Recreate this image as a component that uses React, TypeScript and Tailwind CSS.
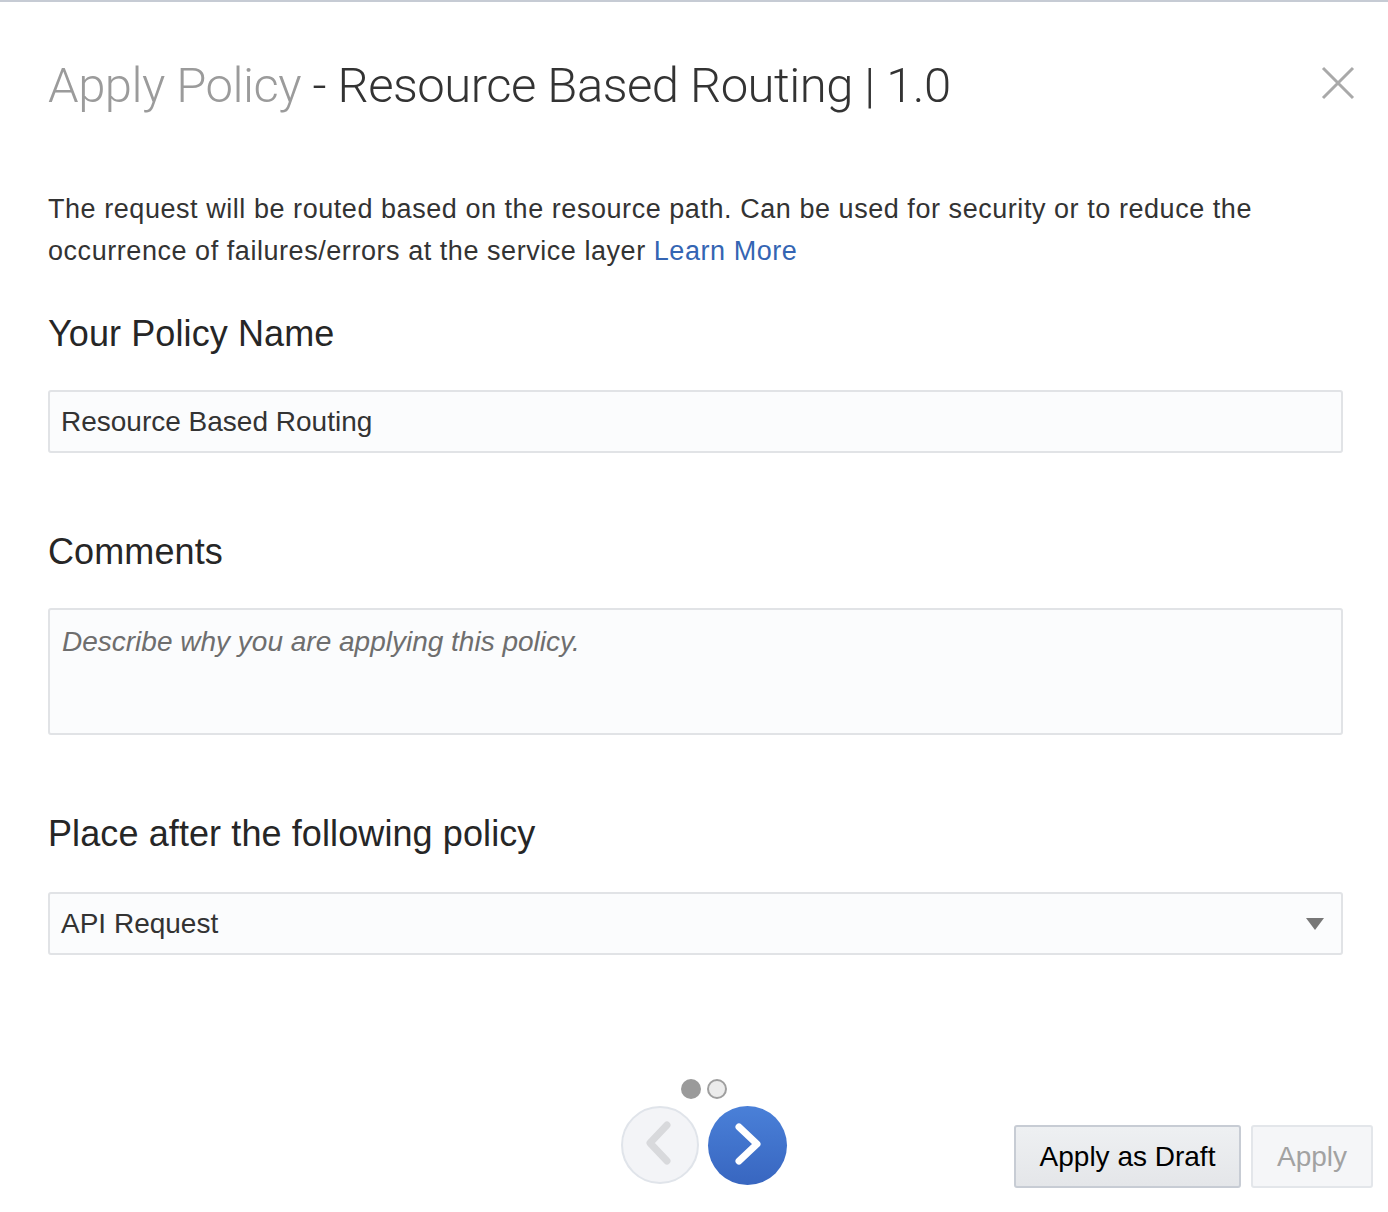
import React from "react";

function CloseIcon() {
  return (
    <svg width="34" height="34" viewBox="0 0 34 34" className="block">
      <path d="M2 2 L32 32 M32 2 L2 32" stroke="#a9a9a9" strokeWidth="3" fill="none" />
    </svg>
  );
}

function Dots() {
  return (
    <div className="flex gap-[6px]">
      <span className="block w-[20px] h-[20px] rounded-full bg-[#9a9a9a]" />
      <span className="block w-[20px] h-[20px] rounded-full bg-[#ececec] border-2 border-[#9f9f9f]" />
    </div>
  );
}

function NavButtons() {
  return (
    <div className="flex gap-[9px]">
      <button
        type="button"
        className="w-[78px] h-[78px] rounded-full bg-[#f3f4f7] border-2 border-[#e0e4ea] flex items-center justify-center"
      >
        <svg width="78" height="78" viewBox="0 0 78 78" className="block shrink-0">
          <polyline
            points="46,19 29,37 46,55"
            stroke="#d8d9dc"
            strokeWidth="7"
            strokeLinecap="round"
            strokeLinejoin="round"
            fill="none"
          />
        </svg>
      </button>
      <button
        type="button"
        className="w-[79px] h-[79px] rounded-full bg-gradient-to-b from-[#4a80d8] to-[#3866c0] flex items-center justify-center"
      >
        <svg width="79" height="79" viewBox="0 0 79 79" className="block shrink-0">
          <polyline
            points="31,21 49,38 31,55"
            stroke="#ffffff"
            strokeWidth="7"
            strokeLinecap="round"
            strokeLinejoin="round"
            fill="none"
          />
        </svg>
      </button>
    </div>
  );
}

export default function App() {
  return (
    <div
      className="w-[1388px] h-[1212px] bg-white border-t-2 border-[#c6cbd4] text-[#333333]"
      style={{ fontFamily: '"Liberation Sans", Arial, sans-serif' }}
    >
      <div className="flex justify-between items-start pl-[48px] pr-[33px]">
        <h1
          className="mt-[55px] text-[49px] leading-[58px] font-light tracking-[-0.5px] text-[#333333]"
          style={{ fontFamily: 'Roboto, "Liberation Sans", sans-serif' }}
        >
          <span className="text-[#9b9b9b]">Apply Policy</span> - Resource Based Routing | 1.0
        </h1>
        <button type="button" className="mt-[64px]">
          <CloseIcon />
        </button>
      </div>

      <div className="pl-[48px] pr-[45px]">
        <p className="mt-[73px] text-[27px] leading-[42px] tracking-[0.55px] text-[#333333]">
          The request will be routed based on the resource path. Can be used for security or to reduce the
          <br />
          occurrence of failures/errors at the service layer{" "}
          <a href="#" className="text-[#3465b3]">
            Learn More
          </a>
        </p>

        <h2 className="mt-[42px] text-[36px] leading-[40px] tracking-[0.1px] text-[#262626]">Your Policy Name</h2>
        <div className="mt-[36px] h-[63px] rounded-[3px] border-2 border-[#e1e3e6] bg-[#fbfcfd] px-[11px] flex items-center text-[28px] text-[#333333]">
          Resource Based Routing
        </div>

        <h2 className="mt-[79px] text-[36px] leading-[40px] tracking-[0.1px] text-[#262626]">Comments</h2>
        <div className="mt-[36px] h-[127px] rounded-[3px] border-2 border-[#e1e3e6] bg-[#fbfcfd] px-[12px] pt-[11px] text-[28px] italic text-[#6e6e6e]">
          Describe why you are applying this policy.
        </div>

        <h2 className="mt-[79px] text-[36px] leading-[40px] tracking-[0.1px] text-[#262626]">
          Place after the following policy
        </h2>
        <div className="mt-[38px] h-[63px] rounded-[3px] border-2 border-[#e1e3e6] bg-[#fbfcfd] pl-[11px] pr-[17px] flex items-center justify-between text-[28px] text-[#333333]">
          <span>API Request</span>
          <svg width="18" height="12" viewBox="0 0 18 12" className="block">
            <polygon points="0,0 18,0 9,12" fill="#777777" />
          </svg>
        </div>
      </div>

      <div className="mt-[124px] flex items-start pr-[15px]">
        <div className="ml-[621px] flex flex-col items-center gap-[7px]">
          <Dots />
          <NavButtons />
        </div>
        <div className="ml-auto mt-[46px] flex gap-[10px]">
          <button
            type="button"
            className="h-[63px] w-[227px] rounded-[3px] border-2 border-[#c7ccd4] bg-gradient-to-b from-[#eef0f2] to-[#e4e6e9] text-[28px] text-black"
          >
            Apply as Draft
          </button>
          <button
            type="button"
            className="h-[63px] w-[122px] rounded-[3px] border-2 border-[#e3e6ea] bg-[#f5f6f8] text-[28px] text-[#a2a2a2]"
          >
            Apply
          </button>
        </div>
      </div>
    </div>
  );
}
